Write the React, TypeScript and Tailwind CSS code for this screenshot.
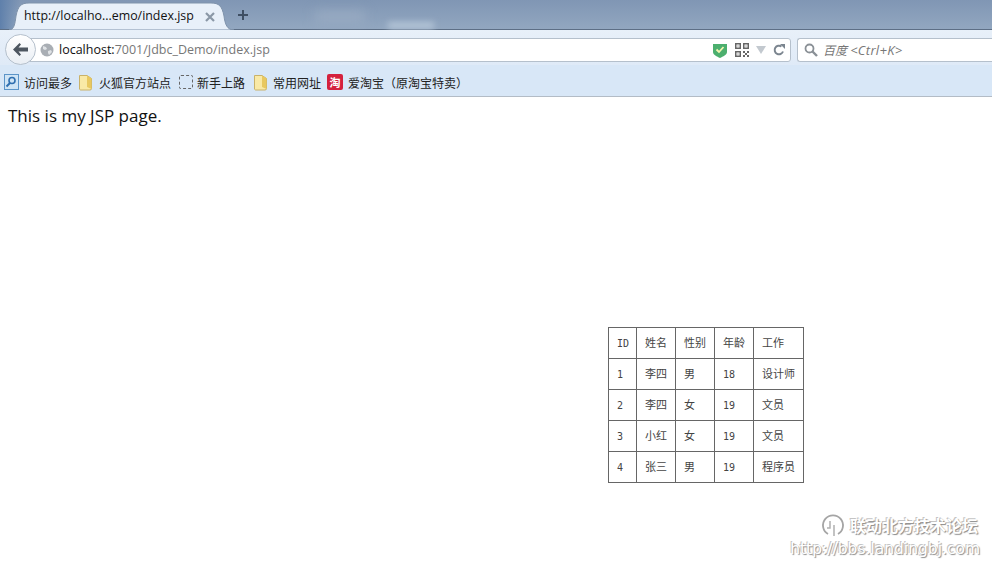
import React from "react";

const UI = '"Open Sans","Noto Sans CJK SC",sans-serif';

const rows = [
  ["ID", "姓名", "性别", "年龄", "工作"],
  ["1", "李四", "男", "18", "设计师"],
  ["2", "李四", "女", "19", "文员"],
  ["3", "小红", "女", "19", "文员"],
  ["4", "张三", "男", "19", "程序员"],
];
const widths = ["w-[28px]", "w-[39px]", "w-[39px]", "w-[39px]", "w-[50px]"];

function Folder() {
  return (
    <svg width="15" height="17" viewBox="0 0 15 17" className="block shrink-0">
      <path d="M1.500 1.500h7.500l4.500 3v10a1.500 1.500 0 0 1-1.500 1.500H2.500a1.500 1.500 0 0 1-1-1z" fill="#f9e9a6" stroke="#c9b26a" />
      <path d="M9 1.500l4.500 3v10.500l-4.500-2z" fill="#e8c860" />
    </svg>
  );
}

function BookmarkLabel({ children }: { children: React.ReactNode }) {
  return <span className="text-[12px] leading-[16px] text-[#222] whitespace-nowrap">{children}</span>;
}

export default function App() {
  return (
    <div className="relative h-[570px] w-[992px] overflow-hidden bg-white" style={{ fontFamily: UI }}>
      <div className="relative h-[30px] bg-gradient-to-b from-[#8096b4] to-[#92a7c0] border-b border-[#5d6f86]">
        <div className="absolute left-0 top-0 h-full w-[20px] bg-gradient-to-r from-[#5f80ab] to-transparent" />
        <div className="absolute left-[315px] top-[12px] h-[10px] w-[50px] bg-[#9aacc3] blur-[6px]" />
        <div className="absolute left-[388px] top-[22px] h-[7px] w-[46px] bg-[#b4c5d7] blur-[3px]" />
        <div className="relative flex h-full items-center">
          <div className="relative ml-[9px] flex h-[28px] w-[225px] translate-y-[1px] items-center pl-[15px]">
            <svg width="225" height="28" viewBox="0 0 225 28" className="absolute left-0 top-0">
              <path d="M0 28C5 28 6 22 7 14 9 4 12 1 20 1H202C210 1 213 4 215 14 216 22 218 28 225 28Z" fill="#e8f0f9" stroke="#7f93ab" />
              <path d="M0 29H225V28H0Z" fill="#e8f0f9" />
            </svg>
            <span className="relative text-[12.400px] leading-[16px] text-[#111] whitespace-nowrap">http://localho...emo/index.jsp</span>
            <svg width="10" height="10" viewBox="0 0 10 10" className="absolute left-[196px] top-[10px]">
              <path d="M1 1L9 9M9 1L1 9" stroke="#8a97a6" strokeWidth="2.200" />
            </svg>
          </div>
          <svg width="12" height="12" viewBox="0 0 12 12" className="ml-[3px]">
            <path d="M6 1V11M1 6H11" stroke="#3f4f63" strokeWidth="2" />
          </svg>
        </div>
      </div>

      <div className="relative flex h-[35px] items-center bg-gradient-to-b from-[#e8f0f9] to-[#dfeaf7] pl-[26px] pt-[5px]">
        <div className="relative flex h-[24px] w-[765px] items-center rounded-r-[3px] border border-[#b5c0cc] bg-white pl-[13px]">
          <svg width="14" height="14" viewBox="0 0 14 14" className="shrink-0">
            <circle cx="7" cy="7" r="6.500" fill="#a9aeb4" />
            <path d="M3 3l3 1 1 2-2 1-2-1zM8 8l3-1 1 2-3 3-1-2z" fill="#dfe2e5" />
          </svg>
          <span className="ml-[5px] text-[12.500px] leading-[16px] whitespace-nowrap text-[#777]">
            <span className="text-[#111]">localhost:</span>7001/Jdbc_Demo/index.jsp
          </span>
          <div className="ml-auto mr-[5px] flex items-center">
            <svg width="14" height="15" viewBox="0 0 14 15">
              <path d="M0 1H14V9C14 12 10 13.500 7 15 4 13.500 0 12 0 9Z" fill="#4caf6e" />
              <path d="M3.500 6.500L6 9 10.500 4" fill="none" stroke="#f3f6b0" strokeWidth="1.800" />
            </svg>
            <svg width="14" height="14" viewBox="0 0 14 14" className="ml-[8px]" fill="#666">
              <path d="M0 0H6V6H0ZM1.500 1.500V4.500H4.500V1.500ZM8 0H14V6H8ZM9.500 1.500V4.500H12.500V1.500ZM0 8H6V14H0ZM1.500 9.500V12.500H4.500V9.500Z" fillRule="evenodd" />
              <path d="M2.500 2.500h1v1h-1zM10.500 2.500h1v1h-1zM2.500 10.500h1v1h-1zM8 8h2v2H8zM12 8h2v2h-2zM10 10h2v2h-2zM8 12h2v2H8zM12 12h2v2h-2z" />
            </svg>
            <svg width="10" height="8" viewBox="0 0 10 8" className="ml-[7px]">
              <path d="M0 0H10L5 8Z" fill="#c3c9cf" />
            </svg>
            <svg width="12" height="12" viewBox="0 0 12 12" className="ml-[7px]">
              <path d="M10 7.500A4.300 4.300 0 1 1 8.500 2.500" fill="none" stroke="#7b858f" strokeWidth="2" />
              <path d="M7 0H12V5Z" fill="#7b858f" />
            </svg>
          </div>
          <div className="absolute left-[-22px] top-[-5px] flex h-[31px] w-[31px] items-center justify-center rounded-full border border-[#b5c0cc] bg-gradient-to-b from-white to-[#e9eef4]">
            <svg width="15" height="13" viewBox="0 0 15 13">
              <path d="M6.500 0L0 6.500L6.500 13L8 11.500 5.500 8.500H15V4.500H5.500L8 1.500Z" fill="#4d5660" />
            </svg>
          </div>
        </div>
        <div className="ml-[6px] flex h-[24px] flex-1 items-center rounded-l-[3px] border border-r-0 border-[#b5c0cc] bg-white pl-[6px]">
          <svg width="14" height="14" viewBox="0 0 14 14" className="shrink-0">
            <circle cx="5.500" cy="5.500" r="4" fill="none" stroke="#8a9096" strokeWidth="1.800" />
            <path d="M8.500 8.500L13 13" stroke="#8a9096" strokeWidth="2.400" />
          </svg>
          <span className="ml-[5px] text-[12px] italic leading-[16px] text-[#777] whitespace-nowrap">
            百度 <span className="text-[13px] tracking-[0.3px]">&lt;Ctrl+K&gt;</span>
          </span>
        </div>
      </div>

      <div className="flex h-[32px] items-center border-b border-[#b3bcc6] bg-[#d8e7f7] pl-[4px] pt-[3px]">
        <svg width="15" height="16" viewBox="0 0 15 16" className="shrink-0">
          <rect x="0.500" y="0.500" width="14" height="15" fill="#cfe4f5" stroke="#5b94c8" />
          <circle cx="8" cy="6.500" r="3" fill="none" stroke="#2f6fb0" strokeWidth="1.600" />
          <path d="M6 9L2.500 12.500" stroke="#2f6fb0" strokeWidth="2" />
        </svg>
        <span className="ml-[5px]"><BookmarkLabel>访问最多</BookmarkLabel></span>
        <span className="ml-[6px]"><Folder /></span>
        <span className="ml-[6px]"><BookmarkLabel>火狐官方站点</BookmarkLabel></span>
        <span className="ml-[8px] h-[14px] w-[14px] rounded-[2px] border border-dashed border-[#666]" />
        <span className="ml-[4px]"><BookmarkLabel>新手上路</BookmarkLabel></span>
        <span className="ml-[8px]"><Folder /></span>
        <span className="ml-[5px]"><BookmarkLabel>常用网址</BookmarkLabel></span>
        <span className="ml-[6px] flex h-[16px] w-[16px] items-center justify-center rounded-[2px] bg-[#d4213d] text-[11px] font-bold leading-none text-white">淘</span>
        <span className="ml-[5px]"><BookmarkLabel>爱淘宝（原淘宝特卖）</BookmarkLabel></span>
      </div>

      <p className="ml-[8px] mt-[7px] text-[17px] leading-[24px] text-[#111]">This is my JSP page.</p>

      <table className="ml-[608px] mt-[199px] border-collapse" style={{ fontFamily: '"DejaVu Sans Mono","Noto Sans CJK SC",monospace' }}>
        <tbody>
          {rows.map((row, r) => (
            <tr key={r} className="h-[31px]">
              {row.map((cell, c) => (
                <td key={c} className={`${widths[c]} border border-[#666] pl-[8px] pt-[2px] ${/^[A-Z0-9]+$/.test(cell) ? "text-[10px]" : "text-[11px]"} leading-[14px] text-[#444] whitespace-nowrap`}>
                  {cell}
                </td>
              ))}
            </tr>
          ))}
        </tbody>
      </table>

      <div className="absolute right-[12px] top-[514px] flex flex-col items-end text-white [text-shadow:1px_1px_1px_#8a8a8a,-1px_-1px_0_#c4c4c4]">
        <div className="mr-[2px] flex items-center">
          <svg width="24" height="24" viewBox="0 0 24 24" className="mr-[5px]">
            <path d="M7 20A10 10 0 1 1 17 20" fill="none" stroke="#a5a5a5" strokeWidth="1.800" />
            <path d="M9 7V14H6M13 11V22" fill="none" stroke="#b0b0b0" strokeWidth="1.500" />
          </svg>
          <span className="text-[16px] font-bold leading-[24px]">联动北方技术论坛</span>
        </div>
        <span className="text-[15.500px] leading-[22px]" style={{ fontFamily: '"DejaVu Sans",sans-serif' }}>http://bbs.landingbj.com</span>
      </div>
    </div>
  );
}
